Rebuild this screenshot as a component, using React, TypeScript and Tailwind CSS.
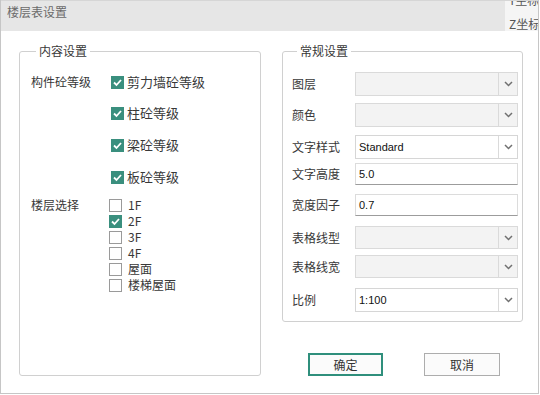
import React from 'react';

type FieldRow = {
  label: string;
  kind: 'select' | 'input';
  value?: string;
  disabled?: boolean;
  rowClass: string;
};

const rows: FieldRow[] = [
  { label: '图层', kind: 'select', disabled: true, rowClass: 'mt-[13px] h-[24px]' },
  { label: '颜色', kind: 'select', disabled: true, rowClass: 'mt-[7px] h-[24px]' },
  { label: '文字样式', kind: 'select', value: 'Standard', rowClass: 'mt-[8px] h-[24px]' },
  { label: '文字高度', kind: 'input', value: '5.0', rowClass: 'mt-[4px] h-[22px]' },
  { label: '宽度因子', kind: 'input', value: '0.7', rowClass: 'mt-[9px] h-[22px]' },
  { label: '表格线型', kind: 'select', disabled: true, rowClass: 'mt-[10px] h-[23px]' },
  { label: '表格线宽', kind: 'select', disabled: true, rowClass: 'mt-[6px] h-[23px]' },
  { label: '比例', kind: 'select', value: '1:100', rowClass: 'mt-[10px] h-[24px]' },
];

const floors = [
  { name: '1F', checked: false },
  { name: '2F', checked: true },
  { name: '3F', checked: false },
  { name: '4F', checked: false },
  { name: '屋面', checked: false },
  { name: '楼梯屋面', checked: false },
];

function CheckBox({ checked }: { checked: boolean }) {
  if (checked) {
    return (
      <span className="flex h-[13px] w-[13px] shrink-0 items-center justify-center bg-[#3a8f7e]">
        <svg width="11" height="11" viewBox="0 0 11 11">
          <polyline points="2,5.5 4.5,8 9,3" fill="none" stroke="#fff" strokeWidth="1.8" />
        </svg>
      </span>
    );
  }
  return <span className="h-[13px] w-[13px] shrink-0 border border-[#9a9a9a] bg-white" />;
}

function Chevron() {
  return (
    <svg width="9" height="6" viewBox="0 0 9 6">
      <polyline points="1,1 4.5,4.5 8,1" fill="none" stroke="#707070" strokeWidth="1.5" />
    </svg>
  );
}

// 值文字用 Arial 宽度
const valueFont = "font-['Liberation_Sans','Noto_Sans_CJK_SC',sans-serif] text-[11px] text-[#111]";

function Field({ row }: { row: FieldRow }) {
  if (row.kind === 'input') {
    return (
      <div className={`flex h-full w-[163px] items-center border border-[#dcdcdc] border-b-[#9c9c9c] bg-white pl-[3px] ${valueFont}`}>
        {row.value}
      </div>
    );
  }
  return (
    <div
      className={`flex h-full w-[163px] border ${
        row.disabled ? 'border-[#dadada] bg-[#f3f3f3]' : 'border-[#d6d6d6] bg-white'
      }`}
    >
      <div className={`flex flex-1 items-center pl-[3px] ${valueFont}`}>{row.value}</div>
      <div className="flex w-[19px] items-center justify-center border-l border-[#dadada]">
        <Chevron />
      </div>
    </div>
  );
}

export default function App() {
  return (
    <div className="h-[395px] w-[540px] bg-white font-['Noto_Sans_CJK_SC',sans-serif] text-[12px] leading-4 text-[#383838]">
      <div className="flex h-[394px] w-[539px] flex-col border-x border-b border-[#c6c6c6]">
        {/* 标题栏 */}
        <div className="flex h-[31px] shrink-0 border-t border-[#d6d6d6]">
          <div className="flex-1 bg-[#e6e6e6] pl-[6px] pt-[3px] text-[12px] leading-4 text-[#6a6a6a]">
            楼层表设置
          </div>
          <div className="w-[33px] overflow-hidden bg-[#f5f5f5] pl-[4px] text-[12px] text-[#555]">
            <div className="-mt-[13px] h-[24px] leading-[24px] whitespace-nowrap">Y坐标</div>
            <div className="h-[24px] leading-[24px] whitespace-nowrap">Z坐标</div>
          </div>
        </div>

        <div className="flex pt-[12px]">
          {/* 内容设置 */}
          <fieldset className="ml-[18px] h-[333px] w-[242px] rounded-[3px] border border-[#d0d0d0] pl-[11px]">
            <legend className="ml-[5px] px-[3px] leading-4">内容设置</legend>
            <div className="mt-[15px] flex h-4 items-center">
              <div className="w-[80px]">构件砼等级</div>
              <CheckBox checked />
              <span className="ml-[3px] text-[13px]">剪力墙砼等级</span>
            </div>
            <div className="mt-[15px] flex h-4 items-center pl-[80px]">
              <CheckBox checked />
              <span className="ml-[3px] text-[13px]">柱砼等级</span>
            </div>
            <div className="mt-[16px] flex h-4 items-center pl-[80px]">
              <CheckBox checked />
              <span className="ml-[3px] text-[13px]">梁砼等级</span>
            </div>
            <div className="mt-[16px] flex h-4 items-center pl-[80px]">
              <CheckBox checked />
              <span className="ml-[3px] text-[13px]">板砼等级</span>
            </div>
            <div className="mt-[12px] flex">
              <div className="h-4 w-[78px]">楼层选择</div>
              <div className="flex flex-col">
                {floors.map(f => (
                  <div key={f.name} className="flex h-4 items-center">
                    <CheckBox checked={f.checked} />
                    <span className="ml-[6px]">{f.name}</span>
                  </div>
                ))}
              </div>
            </div>
          </fieldset>

          <div className="ml-[21px] flex flex-col">
            {/* 常规设置 */}
            <fieldset className="w-[241px] rounded-[3px] border border-[#d0d0d0] pb-[9px] pl-[9px]">
              <legend className="ml-[5px] px-[3px] leading-4">常规设置</legend>
              {rows.map(r => (
                <div key={r.label} className={`flex items-center ${r.rowClass}`}>
                  <div className="w-[63px]">{r.label}</div>
                  <Field row={r} />
                </div>
              ))}
            </fieldset>

            <div className="ml-[26px] mt-[31px] flex gap-[41px]">
              <button className="flex h-[23px] w-[75px] items-center justify-center border-2 border-[#2f8f7c] bg-[#fbfbfb] text-[12px] text-[#333]">
                确定
              </button>
              <button className="flex h-[23px] w-[76px] items-center justify-center border border-[#adadad] bg-[#fbfbfb] text-[12px] text-[#333]">
                取消
              </button>
            </div>
          </div>
        </div>
      </div>
    </div>
  );
}
